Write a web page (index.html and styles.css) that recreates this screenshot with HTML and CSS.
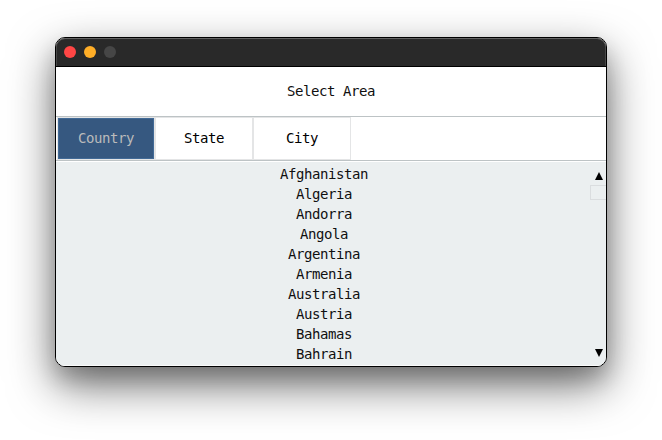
FILE: index.html
```html
<!DOCTYPE html>
<html lang="en">
<head>
<meta charset="utf-8">
<title>Select Area</title>
<link rel="stylesheet" href="styles.css">
</head>
<body>
<main class="window">
  <header class="titlebar">
    <span class="dot close"></span>
    <span class="dot minimize"></span>
    <span class="dot disabled"></span>
  </header>
  <h1 class="heading">Select Area</h1>
  <nav class="tabs">
    <button class="tab active">Country</button>
    <button class="tab">State</button>
    <button class="tab">City</button>
  </nav>
  <section class="content">
    <ul class="list">
      <li>Afghanistan</li>
      <li>Algeria</li>
      <li>Andorra</li>
      <li>Angola</li>
      <li>Argentina</li>
      <li>Armenia</li>
      <li>Australia</li>
      <li>Austria</li>
      <li>Bahamas</li>
      <li>Bahrain</li>
    </ul>
    <div class="scrollbar">
      <svg class="arrow" viewBox="0 0 8 8"><path d="M4 0 8 8H0Z"/></svg>
      <div class="thumb"></div>
      <svg class="arrow down" viewBox="0 0 8 8"><path d="M0 0H8L4 8Z"/></svg>
    </div>
  </section>
</main>
</body>
</html>
```
FILE: styles.css
```css
* {
  box-sizing: border-box;
}

body {
  margin: 0;
  height: 440px;
  padding: 37px 55px 0;
  overflow: hidden;
  background: #fff;
  color: #101010;
  font: 14px/20px "DejaVu Sans Mono", monospace;
  letter-spacing: -0.43px;
}

.window {
  display: flex;
  flex-direction: column;
  width: 552px;
  height: 330px;
  border: 1px solid #000;
  border-radius: 10px;
  overflow: hidden;
  background: #fff;
  box-shadow: 0 18px 46px rgba(0, 0, 0, 0.56), 0 12px 20px rgba(0, 0, 0, 0.16);
}

.titlebar {
  display: flex;
  align-items: center;
  gap: 8px;
  height: 29px;
  padding: 0 8px;
  background: #292929;
  border-bottom: 1px solid #000;
  border-radius: 9px 9px 0 0;
  box-shadow: inset 0 1px 0 #626262, inset 1px 0 0 #484848, inset -1px 0 0 #484848;
}

.dot {
  width: 12px;
  height: 12px;
  border-radius: 50%;
}

.close {
  background: #ff4645;
}

.minimize {
  background: #ffae27;
}

.disabled {
  background: #464646;
}

.heading {
  height: 49px;
  margin: 0;
  font: inherit;
  line-height: 49px;
  text-align: center;
}

.tabs {
  display: flex;
  height: 45px;
  padding: 0 1px;
  border-top: 1px solid #bdc3c5;
  border-bottom: 1px solid #bdc3c5;
}

.tab {
  width: 98px;
  height: 43px;
  padding: 0 0 2px;
  border: 1px solid #e4e5e6;
  background: #fff;
  color: #000;
  font: inherit;
  letter-spacing: inherit;
}

.tab.active {
  background: #365880;
  box-shadow: inset 0 0 0 1px #426a96;
  color: #bbb;
}

.content {
  display: flex;
  height: 204px;
  margin-top: 1px;
  border-bottom: 1px solid #fafbfb;
  background: #ebeff0;
}

.list {
  flex: 1;
  margin: 0;
  padding: 2px 0 0 2px;
  list-style: none;
  text-align: center;
}

.scrollbar {
  display: flex;
  flex-direction: column;
  width: 16px;
  padding: 10px 0 8px;
}

.arrow {
  width: 8px;
  height: 8px;
  margin-left: 5px;
  fill: #000;
}

.thumb {
  height: 15px;
  margin-top: 5px;
  border: 1px solid #dadddf;
  border-right: 0;
}

.down {
  margin-top: auto;
}
```
